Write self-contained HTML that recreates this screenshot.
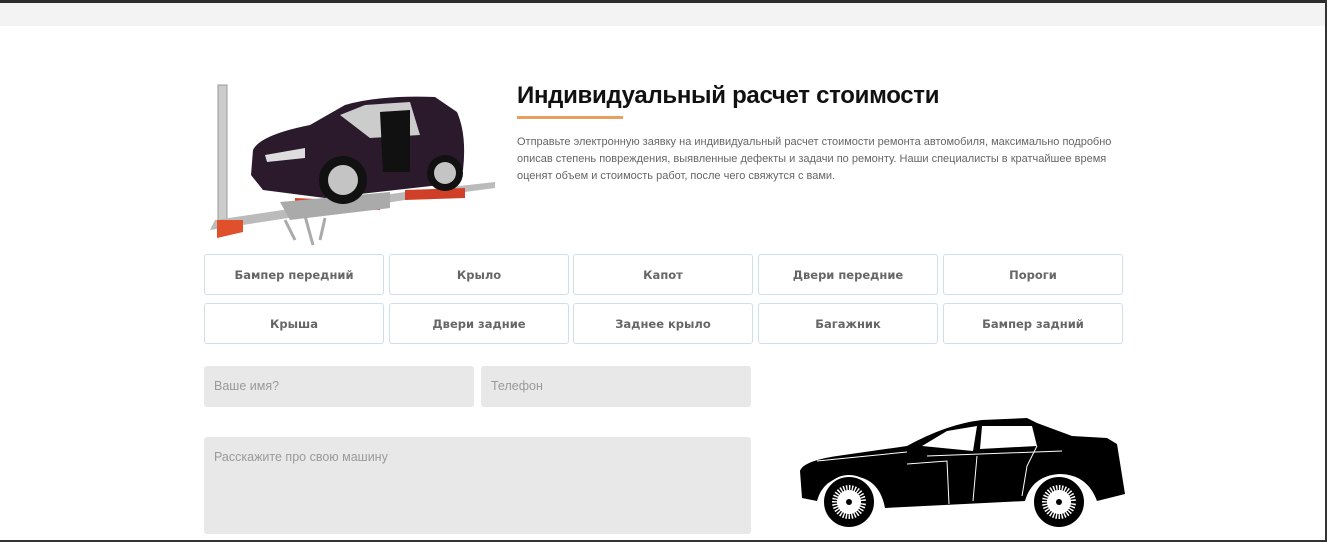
<!DOCTYPE html>
<html><head><meta charset="utf-8"><style>
*{margin:0;padding:0;box-sizing:border-box}
body{width:1327px;height:542px;position:relative;background:#fff;font-family:"Liberation Sans","DejaVu Sans",sans-serif;overflow:hidden}
.top{position:absolute;left:0;top:0;width:1327px;height:3px;background:#2b2b2b}
.band{position:absolute;left:0;top:3px;width:1327px;height:23px;background:#f3f3f3}
.rb{position:absolute;right:0;top:0;width:2px;height:542px;background:#333}
.bb{position:absolute;left:0;bottom:0;width:1327px;height:2px;background:#333}
h1{position:absolute;left:517px;top:82px;font-size:24px;font-weight:bold;color:#111;letter-spacing:-0.3px}
.ul{position:absolute;left:517px;top:116px;width:106px;height:3px;background:#e8a060}
.p{position:absolute;left:517px;top:134px;width:615px;font-size:11px;line-height:17px;color:#666}
.btn{position:absolute;width:180px;height:41px;border:1px solid #cfdeec;border-radius:3px;color:#666;display:flex;align-items:center;justify-content:center;font-family:"DejaVu Sans",sans-serif;font-size:11.5px;font-weight:bold}
.in{position:absolute;background:#e8e8e8;border-radius:3px;font-size:12.5px;color:#9a9a9a;padding-left:10px}
</style></head><body>
<div class="top"></div><div class="band"></div><div class="rb"></div><div class="bb"></div>
<svg style="position:absolute;left:205px;top:80px" width="295" height="170" viewBox="0 0 295 170">
<rect x="13" y="5" width="9" height="145" fill="#ccc" stroke="#999"/>
<path d="M5 150 L200 120 L290 108 L290 102 L200 112 L10 140Z" fill="#bbb"/>
<path d="M12 140 L38 140 L38 152 L12 158Z" fill="#e0502a"/>
<path d="M200 110 L260 108 L260 118 L200 120Z M90 118 L175 122 L175 130 L90 126Z" fill="#d04028"/>
<path d="M75 122 L185 112 L185 128 L85 140Z" fill="#aaa"/>
<path d="M80 140 L90 160 M100 136 L108 165 M120 138 L115 160" stroke="#aaa" stroke-width="3"/>
<path d="M48 70 Q55 55 105 45 L140 25 Q175 15 230 17 L252 32 Q262 55 258 90 L235 105 L120 118 L58 110 L46 95Z" fill="#2a1a2c"/>
<path d="M135 35 L160 25 L205 22 L215 55 L165 58Z" fill="#ccc"/>
<path d="M175 32 L205 30 L205 92 L178 92Z" fill="#111"/>
<path d="M60 75 L100 68 L100 78 L62 82Z" fill="#ddd"/>
<circle cx="138" cy="100" r="24" fill="#111"/><circle cx="138" cy="100" r="15" fill="#c4c4c4"/>
<circle cx="240" cy="93" r="18" fill="#111"/><circle cx="240" cy="93" r="11" fill="#c4c4c4"/>
</svg>
<h1>Индивидуальный расчет стоимости</h1>
<div class="ul"></div>
<div class="p">Отправьте электронную заявку на индивидуальный расчет стоимости ремонта автомобиля, максимально подробно описав степень повреждения, выявленные дефекты и задачи по ремонту. Наши специалисты в кратчайшее время оценят объем и стоимость работ, после чего свяжутся с вами.</div>
<div class="btn" style="left:204px;top:254px">Бампер передний</div>
<div class="btn" style="left:389px;top:254px">Крыло</div>
<div class="btn" style="left:573px;top:254px">Капот</div>
<div class="btn" style="left:758px;top:254px">Двери передние</div>
<div class="btn" style="left:943px;top:254px">Пороги</div>
<div class="btn" style="left:204px;top:303px">Крыша</div>
<div class="btn" style="left:389px;top:303px">Двери задние</div>
<div class="btn" style="left:573px;top:303px">Заднее крыло</div>
<div class="btn" style="left:758px;top:303px">Багажник</div>
<div class="btn" style="left:943px;top:303px">Бампер задний</div>
<div class="in" style="left:204px;top:366px;width:270px;height:41px;line-height:41px">Ваше имя?</div>
<div class="in" style="left:481px;top:366px;width:270px;height:41px;line-height:41px">Телефон</div>
<div class="in" style="left:204px;top:437px;width:547px;height:97px;padding-top:13px">Расскажите про свою машину</div>
<svg style="position:absolute;left:797px;top:416px" width="330" height="112" viewBox="0 0 330 112">
<path d="M3 55 Q6 45 40 40 L110 30 Q150 8 185 4 L230 2 L240 7 L275 20 L310 22 L320 28 L328 78 L300 85 Q290 58 262 58 Q235 60 228 85 L88 92 Q82 60 52 60 Q26 62 20 85 L5 82Z" fill="#000"/>
<path d="M125 30 L150 15 L180 10 L176 35Z M185 10 L235 10 L240 30 L183 33Z" fill="#fff"/>
<path d="M20 45 L110 36 M130 40 L265 35 M110 48 L150 45 L152 88 M180 40 L176 85 M240 30 L230 50 L225 80 M150 90 L225 88" stroke="#fff" stroke-width="1" fill="none"/>
<circle cx="52" cy="86" r="26" fill="#000" stroke="#fff" stroke-width="2"/><circle cx="52" cy="86" r="17" fill="#fff"/><circle cx="52" cy="86" r="15" fill="none" stroke="#000" stroke-width="6" stroke-dasharray="1.5 1.5"/><circle cx="52" cy="86" r="3" fill="#000"/>
<circle cx="262" cy="86" r="26" fill="#000" stroke="#fff" stroke-width="2"/><circle cx="262" cy="86" r="17" fill="#fff"/><circle cx="262" cy="86" r="15" fill="none" stroke="#000" stroke-width="6" stroke-dasharray="1.5 1.5"/><circle cx="262" cy="86" r="3" fill="#000"/>
</svg>
</body></html>
